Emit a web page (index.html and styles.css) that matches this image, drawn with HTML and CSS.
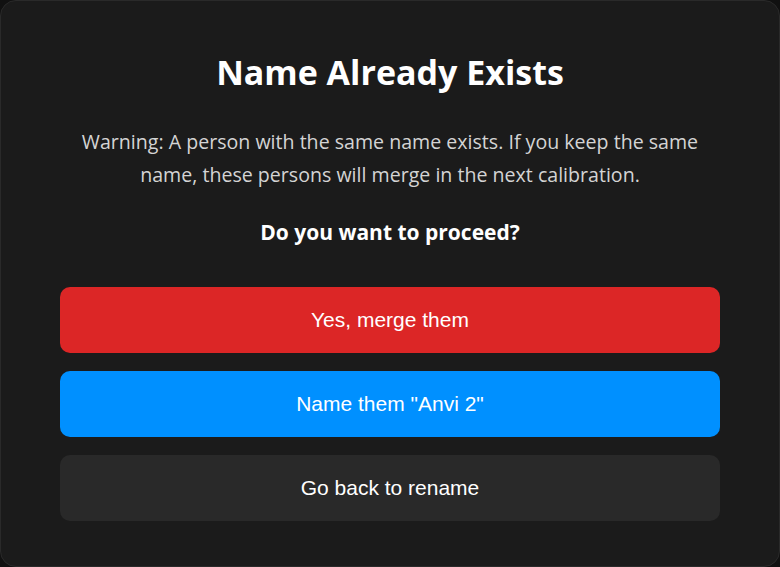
FILE: index.html
```html
<!DOCTYPE html>
<html lang="en">
<head>
<meta charset="utf-8">
<title>Name Already Exists</title>
<link rel="stylesheet" href="styles.css">
</head>
<body>
<div class="dialog">
  <h1 class="title">Name Already Exists</h1>
  <p class="warning">Warning: A person with the same name exists. If you keep the same name, these persons will merge in the next calibration.</p>
  <p class="question">Do you want to proceed?</p>
  <div class="actions">
    <button class="btn btn-red">Yes, merge them</button>
    <button class="btn btn-blue">Name them "Anvi 2"</button>
    <button class="btn btn-gray">Go back to rename</button>
  </div>
</div>
</body>
</html>
```
FILE: styles.css
```css
html, body {
  margin: 0;
  padding: 0;
  background: #111111;
}
.dialog {
  box-sizing: border-box;
  width: 780px;
  height: 567px;
  background: #1b1b1b;
  border: 1px solid #2a2a2a;
  border-radius: 16px;
  padding: 50px 59px 0;
  display: flex;
  flex-direction: column;
  align-items: center;
  font-family: "Open Sans", "Noto Sans", sans-serif;
  text-align: center;
}
.title {
  margin: 0;
  font-size: 34px;
  line-height: 42px;
  font-weight: 700;
  color: #ffffff;
}
.warning {
  margin: 32px 0 0;
  font-size: 19.6px;
  line-height: 33px;
  color: #d4d4d4;
  max-width: 640px;
}
.question {
  margin: 27px 0 0;
  font-size: 21px;
  line-height: 28px;
  font-weight: 700;
  color: #ffffff;
}
.actions {
  margin-top: 41px;
  width: 100%;
  display: flex;
  flex-direction: column;
  gap: 18px;
}
.btn {
  height: 66px;
  border: none;
  border-radius: 10px;
  font-family: "Liberation Sans", Arial, sans-serif;
  font-size: 21px;
  color: #ffffff;
  cursor: pointer;
}
.btn-red { background: #dc2626; }
.btn-blue { background: #0090ff; }
.btn-gray { background: #292929; }
```
